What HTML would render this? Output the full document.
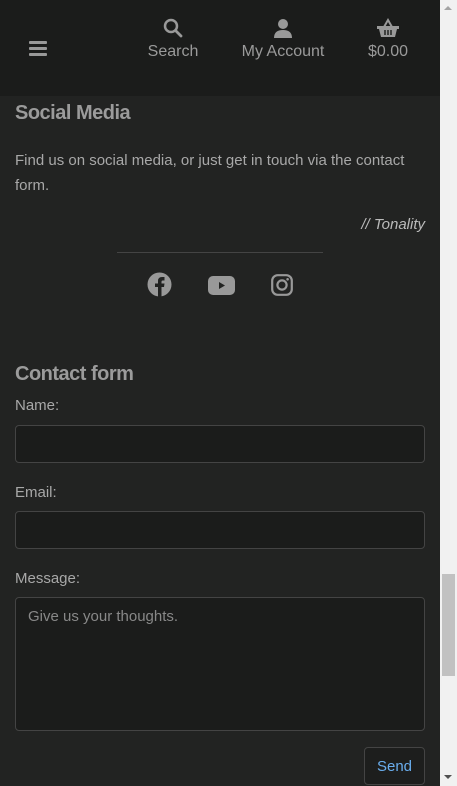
<!DOCTYPE html>
<html><head><meta charset="utf-8"><style>
*{box-sizing:border-box;margin:0;padding:0}
body{width:457px;height:786px;overflow:hidden;background:#222322;font-family:"Liberation Sans",sans-serif;color:#a0a0a0;position:relative}
.main{position:absolute;left:0;top:0;width:440px;height:786px;background:#222322}
.hdr{position:absolute;left:0;top:0;width:440px;height:96px;background:#1b1c1b}
.nav{position:absolute;top:18px;text-align:center;font-size:16px;color:#9a9a9a}
.nav svg{display:block;margin:0 auto 5px}
h2{position:absolute;left:15px;font-size:20px;font-weight:bold;color:#9b9b9b;letter-spacing:-0.5px}
.p{position:absolute;left:15px;font-size:15px;line-height:25px;color:#a8a8a8;width:410px}
label{position:absolute;left:15px;font-size:15px;color:#a8a8a8}
.in{position:absolute;left:15px;width:410px;background:#1b1c1b;border:1px solid #444;border-radius:4px}
.sb{position:absolute;left:440px;top:0;width:17px;height:786px;background:#f1f1f1}
</style></head><body>
<div class="main">
<div class="hdr">
 <div style="position:absolute;left:29px;top:41px;width:18px;height:3px;background:#999;box-shadow:0 6px 0 #999,0 12px 0 #999;border-radius:1px"></div>
 <div class="nav" style="left:143px;width:60px"><svg width="20" height="20" viewBox="0 0 20 20"><circle cx="8" cy="8" r="6" fill="none" stroke="#999" stroke-width="2.5"/><path d="M12.5 12.5L18 18" stroke="#999" stroke-width="2.8" stroke-linecap="round"/></svg>Search</div>
 <div class="nav" style="left:234px;width:98px"><svg width="20" height="20" viewBox="0 0 20 20"><circle cx="10" cy="6" r="5" fill="#999"/><path d="M1 20Q1 12 10 12Q19 12 19 20Z" fill="#999"/></svg>My Account</div>
 <div class="nav" style="left:362px;width:52px"><svg width="24" height="20" viewBox="0 0 24 20"><path d="M8 9L12 2L16 9" fill="none" stroke="#999" stroke-width="2"/><path d="M1 8H23V11H21L19 19H5L3 11H1Z" fill="#999"/><path d="M9 12V17M12 12V17M15 12V17" stroke="#1b1c1b" stroke-width="1.4"/></svg>$0.00</div>
</div>
<h2 style="top:102px">Social Media</h2>
<div class="p" style="top:148px">Find us on social media, or just get in touch via the contact form.</div>
<div class="p" style="top:212px;text-align:right;font-style:italic;color:#bbb">// Tonality</div>
<div style="position:absolute;left:117px;top:252px;width:206px;height:1px;background:#444"></div>
<svg style="position:absolute;left:147px;top:272px" width="25" height="25" viewBox="0 0 25 25"><circle cx="12.5" cy="12.5" r="12" fill="#999"/><path d="M11 25V15H8V11.5H11V9Q11 5 15 5H17.5V8.5H15.5Q14.5 8.5 14.5 9.8V11.5H17.5L17 15H14.5V25Z" fill="#222322"/></svg>
<svg style="position:absolute;left:208px;top:276px" width="27" height="19" viewBox="0 0 27 19"><rect x="0" y="0" width="27" height="19" rx="5" fill="#999"/><path d="M11 6L17 9.5L11 13Z" fill="#222322"/></svg>
<svg style="position:absolute;left:271px;top:274px" width="22" height="22" viewBox="0 0 22 22"><rect x="1.2" y="1.2" width="19.6" height="19.6" rx="5.5" fill="none" stroke="#999" stroke-width="2.2"/><circle cx="11" cy="11" r="4.6" fill="none" stroke="#999" stroke-width="2.2"/><circle cx="16.6" cy="5.3" r="1.3" fill="#999"/></svg>
<h2 style="top:363px">Contact form</h2>
<label style="top:397px">Name:</label>
<div class="in" style="top:425px;height:38px"></div>
<label style="top:484px">Email:</label>
<div class="in" style="top:511px;height:38px"></div>
<label style="top:570px">Message:</label>
<div class="in" style="top:597px;height:134px;padding:10px 12px;font-size:15px;color:#888">Give us your thoughts.</div>
<div style="position:absolute;left:364px;top:747px;width:61px;height:38px;border:1px solid #444;border-radius:4px;background:#1d1e1d;color:#6aaeee;font-size:15px;text-align:center;line-height:38px">Send</div>
</div>
<div class="sb">
 <div style="position:absolute;left:4px;top:6px;border:4px solid transparent;border-bottom:4px solid #a3a3a3;border-top:0"></div>
 <div style="position:absolute;left:2px;top:574px;width:13px;height:102px;background:#c1c1c1"></div>
 <div style="position:absolute;left:4px;top:775px;border:4px solid transparent;border-top:4px solid #505050;border-bottom:0"></div>
</div>
</body></html>
